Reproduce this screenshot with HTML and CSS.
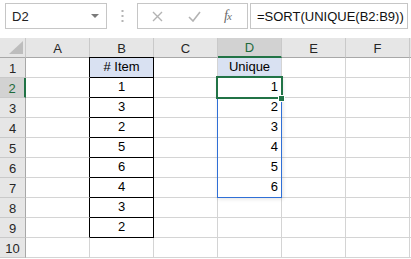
FILE: index.html
```html
<!DOCTYPE html>
<html>
<head>
<meta charset="utf-8">
<link rel="stylesheet" href="styles.css">
</head>
<body>
<div class="bar">
  <div class="namebox"><span>D2</span><svg class="dd" width="8" height="4" viewBox="0 0 8 4"><path d="M0 0H8L4 4Z" fill="#7a7a7a"/></svg></div>
  <div class="sep"><svg width="3" height="12" viewBox="0 0 3 12"><rect x="0.5" y="0" width="2" height="2" fill="#b4b4b4"/><rect x="0.5" y="5" width="2" height="2" fill="#b4b4b4"/><rect x="0.5" y="10" width="2" height="2" fill="#b4b4b4"/></svg></div>
  <div class="btns">
    <svg class="ic x" width="11" height="11" viewBox="0 0 11 11"><path d="M1 1L10 10M10 1L1 10" stroke="#b3b3b3" stroke-width="1.4"/></svg>
    <svg class="ic ok" width="13" height="11" viewBox="0 0 13 11"><path d="M1 6L5 10L12 1" stroke="#b3b3b3" stroke-width="1.6" fill="none"/></svg>
    <span class="fx"><i>f</i><i class="xx">x</i></span>
  </div>
  <div class="formula">=SORT(UNIQUE(B2:B9))</div>
</div>
<div class="sheet">
  <div class="hd corner"><svg width="14" height="13" viewBox="0 0 14 13"><path d="M14 0V13H0Z" fill="#bdbdbd"/></svg></div>
  <div class="hd">A</div><div class="hd">B</div><div class="hd">C</div><div class="hd sel-col">D</div><div class="hd">E</div><div class="hd">F</div><div class="hd end"></div>

  <div class="rh">1</div><div class="c ab"></div><div class="c b top th">#&nbsp;Item</div><div class="c"></div><div class="c th">Unique</div><div class="c"></div><div class="c"></div><div class="c end"></div>
  <div class="rh sel-row">2</div><div class="c ab"></div><div class="c b">1</div><div class="c"></div><div class="c r">1</div><div class="c"></div><div class="c"></div><div class="c end"></div>
  <div class="rh">3</div><div class="c ab"></div><div class="c b">3</div><div class="c"></div><div class="c r">2</div><div class="c"></div><div class="c"></div><div class="c end"></div>
  <div class="rh">4</div><div class="c ab"></div><div class="c b">2</div><div class="c"></div><div class="c r">3</div><div class="c"></div><div class="c"></div><div class="c end"></div>
  <div class="rh">5</div><div class="c ab"></div><div class="c b">5</div><div class="c"></div><div class="c r">4</div><div class="c"></div><div class="c"></div><div class="c end"></div>
  <div class="rh">6</div><div class="c ab"></div><div class="c b">6</div><div class="c"></div><div class="c r">5</div><div class="c"></div><div class="c"></div><div class="c end"></div>
  <div class="rh">7</div><div class="c ab"></div><div class="c b">4</div><div class="c"></div><div class="c r">6</div><div class="c"></div><div class="c"></div><div class="c end"></div>
  <div class="rh">8</div><div class="c ab"></div><div class="c b">3</div><div class="c"></div><div class="c"></div><div class="c"></div><div class="c"></div><div class="c end"></div>
  <div class="rh">9</div><div class="c ab"></div><div class="c b">2</div><div class="c"></div><div class="c"></div><div class="c"></div><div class="c"></div><div class="c end"></div>
  <div class="rh">10</div><div class="c"></div><div class="c"></div><div class="c"></div><div class="c"></div><div class="c"></div><div class="c"></div><div class="c end"></div>

  <div class="spill"></div>
  <div class="active"></div>
  <div class="handle"></div>
</div>
</body>
</html>
```
FILE: styles.css
```css
* { box-sizing: border-box; margin: 0; padding: 0; }
html, body { width: 411px; height: 259px; overflow: hidden; background: #fff; }
body { font-family: "Liberation Sans", Arial, sans-serif; font-size: 13px; color: #000; }

.bar { height: 38px; display: flex; align-items: flex-start; padding: 3px 0 0 5px; background: #fff; }
.namebox { width: 102px; height: 26px; border: 1px solid #c6c6c6; background: #fff; display: flex; align-items: center; justify-content: space-between; padding: 0 7px 0 6px; color: #222; font-size: 13px; }
.namebox span { padding-top: 1px; }
.sep { width: 30px; height: 26px; display: flex; align-items: center; justify-content: center; }
.btns { width: 111px; height: 26px; border: 1px solid #c6c6c6; background: #fff; display: flex; align-items: center; padding-left: 14px; }
.btns .x { margin-right: 25px; }
.btns .ok { margin-right: 23px; }
.fx { font-family: "Liberation Serif", "DejaVu Serif", serif; color: #6b6b6b; font-size: 14px; letter-spacing: -1px; }
.fx .xx { font-size: 11px; }
.formula { width: 158px; height: 26px; margin-left: 2px; border: 1px solid #c6c6c6; background: #fff; display: flex; align-items: center; padding: 1px 0 0 6px; font-size: 13px; color: #111; white-space: nowrap; }

.sheet { position: relative; display: grid; grid-template-columns: 26px repeat(6, 64px) 1fr; grid-auto-rows: 20px; }
.hd { background: #e6e6e6; border-right: 1px solid #c9c9c9; border-bottom: 1px solid #a8a8a8; display: flex; align-items: center; justify-content: center; color: #262626; font-size: 13px; padding-top: 1px; }
.hd.corner { justify-content: flex-end; align-items: flex-end; padding: 0 2px 3px 0; border-right-color: #c9c9c9; }
.hd.sel-col { background: #d2d2d2; color: #1e6b3c; border-bottom: 2px solid #217346; }
.hd.end { border-right: none; }
.rh { background: #e6e6e6; border-right: 1px solid #a8a8a8; border-bottom: 1px solid #c9c9c9; display: flex; align-items: center; justify-content: center; color: #262626; font-size: 13px; padding-top: 1px; }
.rh.sel-row { background: #d2d2d2; color: #1e6b3c; border-right: 2px solid #217346; }
.c { border-right: 1px solid #d4d4d4; border-bottom: 1px solid #d4d4d4; display: flex; align-items: flex-end; justify-content: center; padding-bottom: 3px; line-height: 14px; }
.c.end { border-right: none; }
.c.r { justify-content: flex-end; padding-right: 3px; }
.c.th { background: #d9e1f2; }
.c.ab { border-right-color: #000; }
.c.b { border-right-color: #000; border-bottom-color: #000; }
.c.top { box-shadow: 0 -1px 0 #000, -1px -1px 0 #000; }

.spill { position: absolute; left: 217px; top: 39px; width: 65px; height: 121px; border: 1px solid #2f6fd6; box-shadow: 1px 1px 4px rgba(0,0,0,0.12); }
.active { position: absolute; left: 216px; top: 38px; width: 67px; height: 23px; border: 2px solid #217346; }
.handle { position: absolute; left: 278px; top: 57px; width: 7px; height: 7px; background: #217346; border: 1px solid #fff; }
```
